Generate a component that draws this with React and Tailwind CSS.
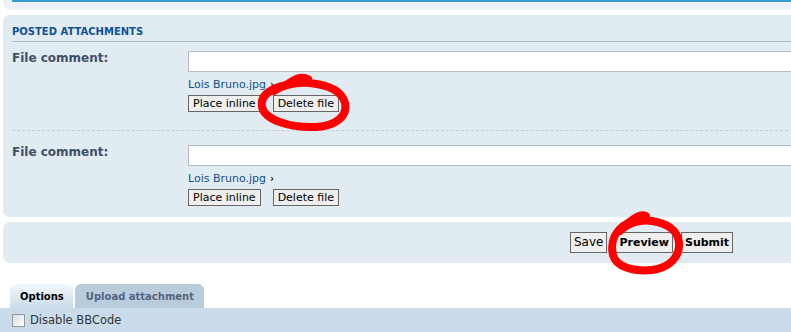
const font = "font-['DejaVu_Sans','Verdana',sans-serif]"

const Btn = ({ children }) => (
  <button
    type="button"
    className="h-[17px] border border-[#666] bg-[#efefef] px-[4px] text-[11px] leading-[15px] text-black"
  >
    {children}
  </button>
)

const AttachmentRow = ({ last }) => (
  <div className={`flex ${last ? 'pt-[14px] pb-[11px]' : 'pt-[9px] pb-[18px] border-b border-dashed border-[#c5ccd3]'}`}>
    <div className="w-[176px] shrink-0 text-[12px] font-bold leading-[14px] text-[#425067]">
      File comment:
    </div>
    <div className="min-w-0 flex-1">
      <div className="h-[21px] w-full border border-[#b4bac0] bg-white" />
      <div className="mt-[6px] flex items-center gap-[4px] text-[11px] leading-[14px] text-[#105289]">
        <span>Lois Bruno.jpg</span>
        <span className="text-[10px] font-bold text-[#222]">›</span>
      </div>
      <div className="mt-[3px] flex gap-[12px]">
        <Btn>Place inline</Btn>
        <Btn>Delete file</Btn>
      </div>
    </div>
  </div>
)

const SubmitBtn = ({ children, bold }) => (
  <button
    type="button"
    className={`h-[21px] border border-[#666] bg-[#efefef] px-[3px] leading-[19px] text-black ${bold ? 'text-[11px] font-bold' : 'text-[12px]'}`}
  >
    {children}
  </button>
)

export default function App() {
  return (
    <div className={`relative h-[332px] w-[791px] overflow-hidden bg-white ${font}`}>
      {/* tail of the previous panel */}
      <div className="ml-[3px] mr-[-12px] h-[10px] rounded-b-[7px] bg-[#ecf3f7] pl-[9px]">
        <div className="h-[2px] bg-[#3a9bcd]" />
      </div>

      {/* posted attachments */}
      <div className="ml-[3px] mr-[-12px] mt-[5px] rounded-[7px] bg-[#e1ebf2] pl-[9px]">
        <h3 className="border-b border-[#b4bac0] pt-[10px] pb-[2px] text-[10px] font-bold leading-[14px] text-[#115098]">
          POSTED ATTACHMENTS
        </h3>
        <AttachmentRow />
        <AttachmentRow last />
      </div>

      {/* submit buttons */}
      <div className="ml-[3px] mr-[-12px] mt-[5px] flex h-[41px] items-center rounded-[7px] bg-[#e1ebf2] pl-[567px]">
        <div className="flex gap-[8px]">
          <SubmitBtn>Save</SubmitBtn>
          <SubmitBtn bold>Preview</SubmitBtn>
          <SubmitBtn bold>Submit</SubmitBtn>
        </div>
      </div>

      {/* tabs */}
      <div className="mt-[21px] flex gap-[2px] pl-[10px]">
        <div className="flex h-[24px] items-center rounded-t-[6px] bg-gradient-to-b from-[#f4f8fb] to-[#cadceb] pl-[10px] pr-[9px] text-[10px] font-bold text-black">
          Options
        </div>
        <div className="flex h-[24px] items-center rounded-t-[6px] bg-[#b8ccdc] pl-[11px] pr-[10px] text-[10px] font-bold text-[#536482]">
          Upload attachment
        </div>
      </div>
      <div className="flex h-[25px] items-center gap-[5px] bg-[#cadceb] pl-[12px]">
        <span className="h-[13px] w-[13px] border border-[#8d9aa6] bg-gradient-to-br from-[#dcdcdc] to-white" />
        <span className="text-[11.5px] text-[#333]">Disable BBCode</span>
      </div>

      {/* red annotation marks */}
      <svg className="pointer-events-none absolute left-0 top-0" width="791" height="332" viewBox="0 0 791 332">
        <path
          d="M308 79 C 300 75, 292 81, 286 85 C 269 89, 260 96, 262 107 C 265 120, 290 128, 316 127 C 337 126, 348 115, 345 103 C 342 91, 328 85, 310 83 C 296 82, 283 85, 274 91"
          fill="none"
          stroke="#ff0000"
          strokeWidth="8"
          strokeLinecap="round"
          strokeLinejoin="round"
        />
        <path
          d="M646 216 C 640 213, 634 219, 628 223 C 615 230, 610 242, 613 255 C 616 267, 634 272, 652 270 C 669 268, 680 257, 679 243 C 678 229, 665 223, 652 221 C 640 219, 628 223, 620 231"
          fill="none"
          stroke="#ff0000"
          strokeWidth="8"
          strokeLinecap="round"
          strokeLinejoin="round"
        />
      </svg>
    </div>
  )
}
